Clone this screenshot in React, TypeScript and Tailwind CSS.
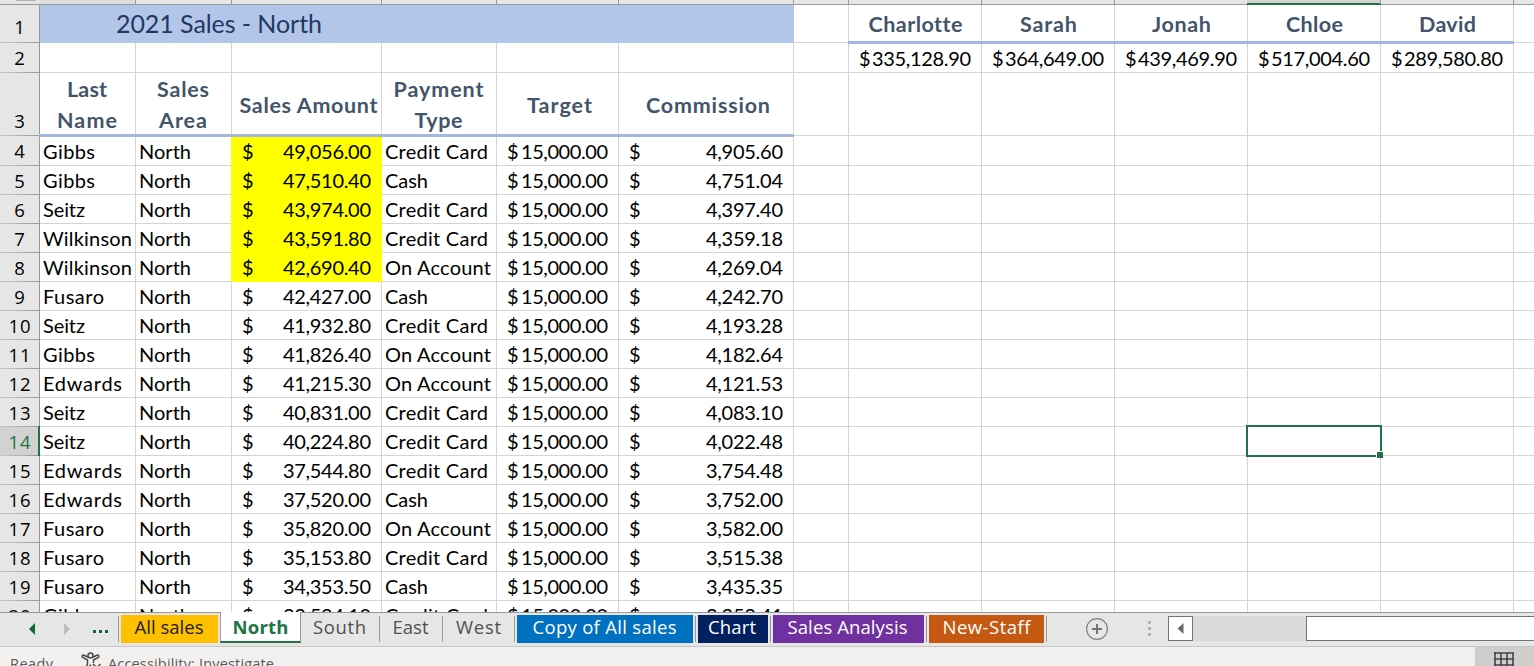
import { useLayoutEffect, useRef, useState } from "react";
import type { ReactNode } from "react";

/** A line of text whose tracking is adjusted so that it fills a given width. */
function Fit({ w, children, className = "" }: { w: number; children: string; className?: string }) {
  const ref = useRef<HTMLSpanElement>(null);
  const [gap, setGap] = useState(0);
  useLayoutEffect(() => {
    const el = ref.current;
    if (!el) return;
    el.style.letterSpacing = "0px";
    el.style.marginRight = "0px";
    const natural = el.getBoundingClientRect().width;
    const next = children.length > 1 ? (w - natural) / (children.length - 1) : 0;
    el.style.letterSpacing = `${next}px`;
    el.style.marginRight = `${-next}px`;
    setGap(next);
  }, [w, children]);
  return (
    <span
      ref={ref}
      className={`inline-block shrink-0 whitespace-pre ${className}`}
      style={{ letterSpacing: `${gap}px`, marginRight: `${-gap}px` }}
    >
      {children}
    </span>
  );
}

const COLS =
  "grid grid-rows-[minmax(0,1fr)] grid-cols-[40px_96px_96px_150px_115px_122px_175px_55px_133px_133px_133px_133px_133px_20px]";

const WIDTHS: Record<string, number> = {
  Gibbs: 52,
  Seitz: 42,
  Wilkinson: 89,
  Fusaro: 61,
  Edwards: 79,
  "Credit Card": 103,
  Cash: 43,
  "On Account": 106,
};

const ROWS: [string, string, string, string][] = [
  ["Gibbs", "49,056.00", "Credit Card", "4,905.60"],
  ["Gibbs", "47,510.40", "Cash", "4,751.04"],
  ["Seitz", "43,974.00", "Credit Card", "4,397.40"],
  ["Wilkinson", "43,591.80", "Credit Card", "4,359.18"],
  ["Wilkinson", "42,690.40", "On Account", "4,269.04"],
  ["Fusaro", "42,427.00", "Cash", "4,242.70"],
  ["Seitz", "41,932.80", "Credit Card", "4,193.28"],
  ["Gibbs", "41,826.40", "On Account", "4,182.64"],
  ["Edwards", "41,215.30", "On Account", "4,121.53"],
  ["Seitz", "40,831.00", "Credit Card", "4,083.10"],
  ["Seitz", "40,224.80", "Credit Card", "4,022.48"],
  ["Edwards", "37,544.80", "Credit Card", "3,754.48"],
  ["Edwards", "37,520.00", "Cash", "3,752.00"],
  ["Fusaro", "35,820.00", "On Account", "3,582.00"],
  ["Fusaro", "35,153.80", "Credit Card", "3,515.38"],
  ["Fusaro", "34,353.50", "Cash", "3,435.35"],
  ["Gibbs", "33,524.10", "Credit Card", "3,352.41"],
];

const PEOPLE: [string, number, string][] = [
  ["Charlotte", 93, "335,128.90"],
  ["Sarah", 57, "364,649.00"],
  ["Jonah", 59, "439,469.90"],
  ["Chloe", 57, "517,004.60"],
  ["David", 57, "289,580.80"],
];

function RowHead({ n, active = false }: { n: number; active?: boolean }) {
  const lift = n === 1 ? "mb-[2px]" : n < 5 ? "mb-px" : "mb-0";
  return (
    <div
      className={`relative flex items-end justify-center pr-px pb-px ${
        active ? "bg-[#d2d2d2] text-[#217346]" : "bg-[#e6e6e6] text-black"
      }`}
    >
      <Fit w={n > 9 ? 22 : 11} className={`${lift} font-['Open_Sans',sans-serif] text-[18.5px] leading-[26px]`}>
        {String(n)}
      </Fit>
      <div className="absolute inset-x-0 bottom-0 h-px bg-linear-to-r from-[#c8c8c8] to-[#999999]" />
      {active ? (
        <div className="absolute -top-px right-0 bottom-0 w-[2px] bg-[#217346]" />
      ) : (
        <div className="absolute inset-y-0 right-0 w-px bg-[#999999]" />
      )}
    </div>
  );
}

function Cell({ children, className = "" }: { children?: ReactNode; className?: string }) {
  return (
    <div className={`relative flex items-end border-r border-b border-[#d4d4d4] leading-[28px] ${className}`}>
      {children}
    </div>
  );
}

function BlueRule() {
  return <div className="absolute -right-px -bottom-[2px] -left-px z-10 h-[3px] bg-[#a2b8e1]" />;
}

function Selection() {
  return (
    <div className="absolute -top-[2px] -right-[2px] -bottom-[2px] -left-[2px] z-20 border-2 border-[#217346]">
      <div className="absolute -right-[3px] -bottom-[3px] h-[7px] w-[7px] border-t border-l border-white bg-[#217346]" />
    </div>
  );
}

function HeadCell({ lines }: { lines: [string, number][] }) {
  return (
    <Cell
      className={`flex-col !items-center justify-center pt-[2px] text-[21.5px] !leading-[31px] font-bold text-[#44546a] ${
        lines.length > 1 ? "pr-px" : "pl-[4px]"
      }`}
    >
      {lines.map(([t, w]) => (
        <Fit key={t} w={w}>
          {t}
        </Fit>
      ))}
      <BlueRule />
    </Cell>
  );
}

function Dollar() {
  return <span className="inline-block w-[11px] text-center">$</span>;
}

function DataRow({ n, row }: { n: number; row: [string, string, string, string] }) {
  const [name, amount, pay, commission] = row;
  const lit = n <= 8;
  return (
    <div className={`${COLS} ${n === 4 ? "h-[30px]" : "h-[29px]"} shrink-0`}>
      <RowHead n={n} active={n === 14} />
      <Cell className="pl-[3px]">
        <Fit w={WIDTHS[name]}>{name}</Fit>
      </Cell>
      <Cell className="pl-[3px]">
        <Fit w={52}>North</Fit>
      </Cell>
      <Cell
        className={`justify-between pr-[10px] pl-[10px] ${
          lit ? "border-[#ffff00]! bg-[#ffff00] shadow-[-1px_0_0_#ffff00]" : ""
        }`}
      >
        <Dollar />
        <Fit w={88}>{amount}</Fit>
      </Cell>
      <Cell className="pl-[3px]">
        <Fit w={WIDTHS[pay]}>{pay}</Fit>
      </Cell>
      <Cell className="justify-between pr-[10px] pl-[10px]">
        <Dollar />
        <Fit w={87}>15,000.00</Fit>
      </Cell>
      <Cell className="justify-between pr-[10px] pl-[10px]">
        <Dollar />
        <Fit w={77}>{commission}</Fit>
      </Cell>
      <Cell />
      <Cell />
      <Cell />
      <Cell />
      <Cell>{n === 14 && <Selection />}</Cell>
      <Cell />
      <Cell className="border-r-0" />
    </div>
  );
}

const STRIP = ["", "", "", "", "", "", "", "", "", "", "", "", ""];

function Sheet() {
  return (
    <div className="flex h-[612px] shrink-0 flex-col overflow-hidden bg-white font-['Lato','Liberation_Sans',sans-serif] text-[20px] text-black">
      <div className={`${COLS} h-[5px] shrink-0 bg-[#e6e6e6]`}>
        <div className="border-b border-[#999999]">
          <div className="ml-[16px] h-px w-[20px] bg-[#b4b4b4]" />
        </div>
        {STRIP.map((_, i) => (
          <div
            key={i}
            className={
              i === 10
                ? "-ml-px border-r border-b-2 border-r-[#999999] border-b-[#217346] bg-[#d2d2d2]"
                : i === 12
                  ? "border-b border-[#999999]"
                  : i < 1
                    ? "border-r border-b border-[#999999] bg-[#dcdcdc]"
                    : "border-r border-b border-[#999999]"
            }
          />
        ))}
      </div>

      <div className={`${COLS} h-[38px] shrink-0`}>
        <RowHead n={1} />
        <div className="col-span-6 flex items-center bg-[#b4c6e7] pl-[76px] text-[25px] text-[#1f3864]">
          <Fit w={206}>2021 Sales - North</Fit>
        </div>
        <Cell />
        {PEOPLE.map(([name, w]) => (
          <Cell
            key={name}
            className="!items-center justify-center pt-px pl-px text-[21.5px] font-bold text-[#44546a]"
          >
            <Fit w={w}>{name}</Fit>
            <BlueRule />
          </Cell>
        ))}
        <Cell className="border-r-0" />
      </div>

      <div className={`${COLS} h-[30px] shrink-0`}>
        <RowHead n={2} />
        <Cell />
        <Cell />
        <Cell />
        <Cell />
        <Cell />
        <Cell />
        <Cell />
        {PEOPLE.map(([name, , total]) => (
          <Cell key={name} className="justify-between pr-[10px] pl-[10px]">
            <Dollar />
            <Fit w={99}>{total}</Fit>
          </Cell>
        ))}
        <Cell className="border-r-0" />
      </div>

      <div className={`${COLS} h-[63px] shrink-0`}>
        <RowHead n={3} />
        <HeadCell lines={[["Last", 40], ["Name", 60]]} />
        <HeadCell lines={[["Sales", 52], ["Area", 48]]} />
        <HeadCell lines={[["Sales Amount", 138]]} />
        <HeadCell lines={[["Payment", 90], ["Type", 48]]} />
        <HeadCell lines={[["Target", 65]]} />
        <HeadCell lines={[["Commission", 124]]} />
        <Cell />
        <Cell />
        <Cell />
        <Cell />
        <Cell />
        <Cell />
        <Cell className="border-r-0" />
      </div>

      {ROWS.map((row, i) => (
        <DataRow key={i} n={i + 4} row={row} />
      ))}
    </div>
  );
}

function Sep({ className = "" }: { className?: string }) {
  return <div className={`mt-[3px] h-[26px] w-px shrink-0 bg-[#999999] ${className}`} />;
}

function Tab({ label, w, className }: { label: string; w: number; className: string }) {
  return (
    <div className={`mt-[2px] flex h-[28px] shrink-0 items-center justify-center ${className}`}>
      <Fit w={w} className="-mt-[4px]">
        {label}
      </Fit>
    </div>
  );
}

function TabBar() {
  return (
    <div className="flex h-[35px] shrink-0 items-start border-t border-b border-t-[#999999] border-b-[#c6c6c6] bg-[#e6e6e6] font-['Open_Sans','Noto_Sans',sans-serif] text-[18.5px] leading-[26px] text-[#505050]">
      <svg className="mt-[9px] ml-[28px] h-[14px] w-[44px] shrink-0" viewBox="0 0 44 14">
        <path d="M7 1 L1 7 L7 13Z" fill="#0e6b38" />
        <path d="M36 1 L42 7 L36 13Z" fill="#bcbcbc" />
      </svg>
      <svg className="mt-[17px] ml-[20px] h-[4px] w-[17px] shrink-0" viewBox="0 0 17 4" fill="#0e6b38">
        <rect x="1" y="0" width="3" height="3" />
        <rect x="7" y="0" width="3" height="3" />
        <rect x="13" y="0" width="3" height="3" />
      </svg>
      <Sep className="ml-[9px]" />
      <Tab label="All sales" w={69} className="ml-[2px] w-[97px] bg-[#ffc000] pr-px text-[#1c1c1c]" />
      <div className="relative z-10 -mt-px ml-[2px] flex h-[31px] w-[81px] shrink-0 items-center justify-center border-r border-b-2 border-l border-r-[#999999] border-b-[#217346] border-l-[#999999] bg-white font-bold text-[#217346]">
        <Fit w={56}>North</Fit>
      </div>
      <Tab label="South" w={53} className="w-[78px] pr-px" />
      <Sep />
      <Tab label="East" w={36} className="w-[62px] pr-px" />
      <Sep />
      <Tab label="West" w={45} className="w-[71px]" />
      <Sep />
      <Tab label="Copy of All sales" w={144} className="ml-[2px] w-[176px] bg-[#0070c0] pr-px text-white" />
      <Sep className="ml-[2px]" />
      <Tab label="Chart" w={48} className="ml-[2px] w-[70px] bg-[#002060] pr-[2px] text-white" />
      <Sep className="ml-[2px]" />
      <Tab label="Sales Analysis" w={120} className="ml-[2px] w-[151px] bg-[#7030a0] pr-[2px] text-white" />
      <Sep className="ml-[2px]" />
      <Tab label="New-Staff" w={88} className="ml-[2px] w-[115px] bg-[#c65911] text-white" />
      <Sep className="ml-[2px]" />
      <svg className="mt-[4px] ml-[38px] h-[24px] w-[24px] shrink-0" viewBox="0 0 24 24" fill="none">
        <circle cx="12" cy="12" r="10.4" stroke="#808080" strokeWidth="1.2" />
        <path d="M12 7V17M7 12H17" stroke="#757575" strokeWidth="2" />
      </svg>
      <div className="mt-[8px] ml-[39px] flex w-[3px] shrink-0 flex-col gap-[3px]">
        <div className="h-[3px] bg-[#b1b1b1]" />
        <div className="h-[3px] bg-[#b1b1b1]" />
        <div className="h-[3px] bg-[#b1b1b1]" />
      </div>
      <div className="mt-[3px] ml-[17px] flex h-[25px] w-[366px] shrink-0 bg-[#dadada]">
        <div className="flex h-[25px] w-[25px] items-center justify-center border border-[#737373] bg-white">
          <svg className="h-[11px] w-[7px]" viewBox="0 0 7 11">
            <path d="M6.5 0V11L0.5 5.5Z" fill="#6a6a6a" />
          </svg>
        </div>
        <div className="ml-[113px] flex-1 border border-r-0 border-[#737373] bg-white" />
      </div>
    </div>
  );
}

function StatusBar() {
  return (
    <div className="flex h-[19px] shrink-0 items-start overflow-hidden bg-[#f3f1ef] font-['Open_Sans','Noto_Sans',sans-serif] text-[14.5px] leading-[20px] text-[#5a5a5a]">
      <Fit w={43} className="mt-[7px] ml-[10px]">
        Ready
      </Fit>
      <svg
        className="mt-[5px] ml-[28px] h-[22px] w-[22px] shrink-0"
        viewBox="0 0 22 22"
        fill="none"
        stroke="#4a4a4a"
        strokeWidth="1.5"
        strokeLinejoin="round"
        strokeLinecap="round"
      >
        <circle cx="9.5" cy="3.4" r="2.5" />
        <path d="M6.8 5 L3 3.2 C1.4 2.6 .4 4.8 2 5.6 L6.5 8 V12 L4.5 17 C4 19 6 19.5 6.8 18 L9.5 13 M12.2 5 L16 3.2 C17.6 2.6 18.6 4.8 17 5.6 L12.5 8 V10.5" />
        <path d="M12.5 12.5 L19 19 M19 12.5 L12.5 19" />
      </svg>
      <Fit w={166} className="mt-[7px] ml-[5px]">
        Accessibility: Investigate
      </Fit>
      <div className="ml-auto h-[19px] w-[59px] bg-[#d0cecd] pt-[5px] pl-[19px]">
        <svg className="h-[14px] w-[20px]" viewBox="0 0 20 14" fill="none" stroke="#444444" strokeWidth="1.6">
          <path d="M0 1H20M1 0V14M7 1V14M13 1V14M19 1V14M0 7H20M0 13H20" />
        </svg>
      </div>
    </div>
  );
}

export default function App() {
  return (
    <div className="flex h-[666px] w-[1534px] flex-col overflow-hidden">
      <Sheet />
      <TabBar />
      <StatusBar />
    </div>
  );
}
